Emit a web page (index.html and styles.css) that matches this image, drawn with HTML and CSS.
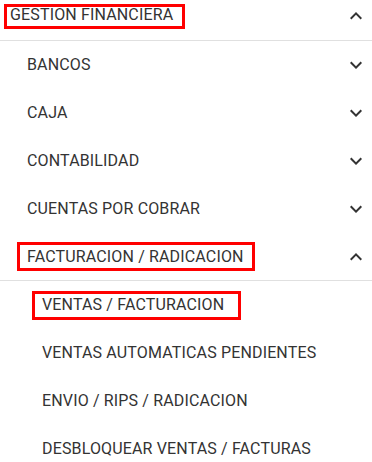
FILE: index.html
```html
<!DOCTYPE html>
<html lang="es">
<head>
<meta charset="utf-8">
<title>Menú</title>
<link rel="stylesheet" href="styles.css">
</head>
<body>
<nav class="menu">
  <div class="row top">
    <span class="mark mark-top">GESTION FINANCIERA</span>
    <svg class="chev" viewBox="0 0 24 24"><path d="M12 8l-6 6 1.41 1.41L12 10.83l4.59 4.58L18 14z"/></svg>
  </div>
  <div class="row l1"><span>BANCOS</span><svg class="chev" viewBox="0 0 24 24"><path d="M16.59 8.59L12 13.17 7.41 8.59 6 10l6 6 6-6z"/></svg></div>
  <div class="row l1"><span>CAJA</span><svg class="chev" viewBox="0 0 24 24"><path d="M16.59 8.59L12 13.17 7.41 8.59 6 10l6 6 6-6z"/></svg></div>
  <div class="row l1"><span>CONTABILIDAD</span><svg class="chev" viewBox="0 0 24 24"><path d="M16.59 8.59L12 13.17 7.41 8.59 6 10l6 6 6-6z"/></svg></div>
  <div class="row l1"><span>CUENTAS POR COBRAR</span><svg class="chev" viewBox="0 0 24 24"><path d="M16.59 8.59L12 13.17 7.41 8.59 6 10l6 6 6-6z"/></svg></div>
  <div class="row l1 open">
    <span class="mark mark-fact">FACTURACION / RADICACION</span>
    <svg class="chev" viewBox="0 0 24 24"><path d="M12 8l-6 6 1.41 1.41L12 10.83l4.59 4.58L18 14z"/></svg>
  </div>
  <div class="row l2"><span class="mark mark-ventas">VENTAS / FACTURACION</span></div>
  <div class="row l2"><span>VENTAS AUTOMATICAS PENDIENTES</span></div>
  <div class="row l2"><span>ENVIO / RIPS / RADICACION</span></div>
  <div class="row l2"><span>DESBLOQUEAR VENTAS / FACTURAS</span></div>
</nav>
</body>
</html>
```
FILE: styles.css
```css
html, body {
  margin: 0;
  padding: 0;
  background: #ffffff;
}
body {
  font-family: Roboto, "Liberation Sans", sans-serif;
  font-size: 16px;
  letter-spacing: 0.15px;
  color: #333333;
  width: 372px;
  overflow: hidden;
}
.menu {
  display: flex;
  flex-direction: column;
}
.row {
  box-sizing: border-box;
  display: flex;
  align-items: center;
  justify-content: space-between;
  height: 48px;
  padding-right: 4px;
  line-height: 16px;
  white-space: nowrap;
}
.chev {
  width: 24px;
  height: 24px;
  fill: #333333;
  flex: none;
}
.top {
  height: 41px;
  align-items: flex-start;
  padding-top: 4px;
  padding-left: 4px;
  border-bottom: 1px solid #e0e0e0;
}
.l1 {
  padding-left: 27px;
}
.l1.open {
  border-bottom: 1px solid #e0e0e0;
}
.l2 {
  padding-left: 42px;
}
.mark {
  box-sizing: border-box;
  display: inline-flex;
  align-items: center;
  border: 3px solid #ff0000;
}
.mark-top {
  width: 181px;
  height: 25px;
  padding: 0 0 3px 3px;
}
.mark-fact {
  width: 238px;
  height: 29px;
  margin-left: -10px;
  padding-left: 7px;
}
.mark-ventas {
  width: 209px;
  height: 29px;
  margin-left: -10px;
  padding-left: 7px;
}
```
